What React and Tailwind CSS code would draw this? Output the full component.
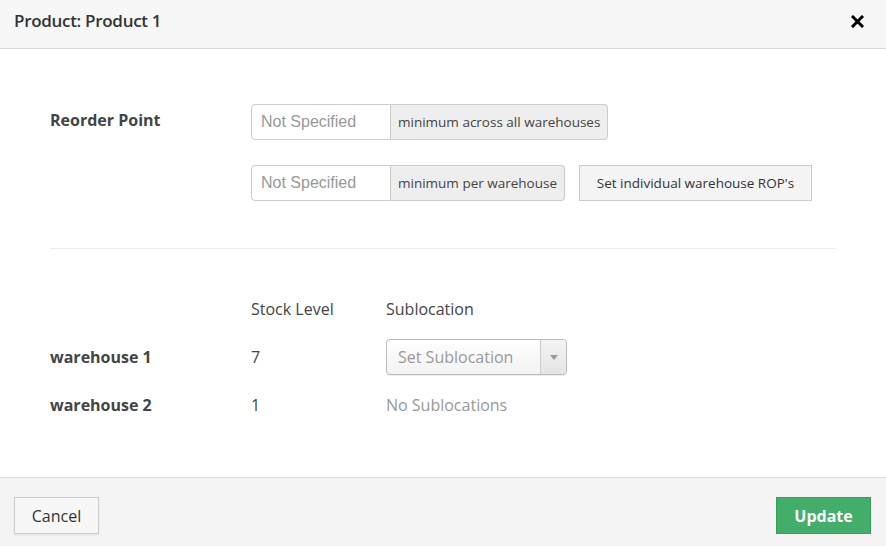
import React from "react";

export default function App() {
  const os = { fontFamily: '"Open Sans", "Liberation Sans", sans-serif' };
  return (
    <div className="w-[886px] h-[546px] bg-white flex flex-col text-[#444]" style={os}>
      {/* header */}
      <div className="h-[49px] shrink-0 bg-[#f7f7f7] border-b border-[#d9d9d9] flex items-center justify-between pl-[14px] pr-[22px]">
        <div className="text-[17px] font-semibold text-[#333] tracking-[-0.3px] -mt-[6px]">Product: Product 1</div>
        <svg width="13" height="13" viewBox="0 0 13 13" className="-mt-[6px]">
          <path d="M2 2 L11 11 M11 2 L2 11" stroke="#000" strokeWidth="3" strokeLinecap="square" />
        </svg>
      </div>

      {/* body */}
      <div className="flex-1 px-[50px] pt-[55px]">
        <div className="flex">
          <div className="w-[201px] pt-[4px] text-[16px] font-bold text-[#444]">Reorder Point</div>
          <div className="flex flex-col gap-[25px]">
            <div className="flex h-[36px]">
              <div className="w-[140px] border border-[#ccc] rounded-l-[4px] bg-white flex items-center px-[9px] text-[16px] text-[#999]" style={{ fontFamily: '"Liberation Sans", Arial, sans-serif' }}>Not Specified</div>
              <div className="border border-l-0 border-[#ccc] rounded-r-[4px] bg-[#eee] flex items-center px-[7px] text-[13.5px] text-[#444]">minimum across all warehouses</div>
            </div>
            <div className="flex items-center gap-[14px]">
              <div className="flex h-[36px]">
                <div className="w-[140px] border border-[#ccc] rounded-l-[4px] bg-white flex items-center px-[9px] text-[16px] text-[#999]" style={{ fontFamily: '"Liberation Sans", Arial, sans-serif' }}>Not Specified</div>
                <div className="border border-l-0 border-[#ccc] rounded-r-[4px] bg-[#eee] flex items-center px-[7px] text-[13.5px] text-[#444]">minimum per warehouse</div>
              </div>
              <button className="h-[36px] w-[233px] border border-[#ccc] bg-[#f4f4f4] text-[13.5px] text-[#333]" style={os}>Set individual warehouse ROP's</button>
            </div>
          </div>
        </div>

        <div className="mt-[47px] h-px bg-[#ececec] w-[786px]" />

        <div className="mt-[48px] grid grid-cols-[201px_135px_1fr] text-[16px]">
          <div />
          <div className="h-[24px] flex items-center">Stock Level</div>
          <div className="h-[24px] flex items-center">Sublocation</div>

          <div className="h-[36px] mt-[18px] flex items-center font-bold">warehouse 1</div>
          <div className="h-[36px] mt-[18px] flex items-center">7</div>
          <div className="h-[36px] mt-[18px] flex items-center">
            <div className="w-[181px] h-[36px] border border-[#bbb] rounded-[4px] flex bg-gradient-to-b from-white to-[#f2f2f2] shadow-[0_1px_1px_rgba(0,0,0,0.08)]">
              <div className="flex-1 flex items-center pl-[11px] text-[16px] text-[#999]">Set Sublocation</div>
              <div className="w-[26px] border-l border-[#ccc] flex items-center justify-center bg-gradient-to-b from-[#f4f4f4] to-[#e4e4e4] rounded-r-[4px]">
                <svg width="8" height="5" viewBox="0 0 8 5"><path d="M0 0 L8 0 L4 5 Z" fill="#999" /></svg>
              </div>
            </div>
          </div>

          <div className="h-[24px] mt-[18px] flex items-center font-bold">warehouse 2</div>
          <div className="h-[24px] mt-[18px] flex items-center">1</div>
          <div className="h-[24px] mt-[18px] flex items-center text-[#999]">No Sublocations</div>
        </div>
      </div>

      {/* footer */}
      <div className="h-[69px] shrink-0 bg-[#f4f4f4] border-t border-[#ddd] flex items-start justify-between pl-[14px] pr-[15px] pt-[19px]">
        <button className="h-[37px] w-[85px] border border-[#ccc] bg-[#f7f7f7] text-[16px] text-[#333] shadow-[0_1px_2px_rgba(0,0,0,0.08)]" style={os}>Cancel</button>
        <button className="h-[37px] w-[95px] border border-[#3a9c5e] bg-[#43ad6a] text-[16px] font-bold text-white" style={os}>Update</button>
      </div>
    </div>
  );
}
